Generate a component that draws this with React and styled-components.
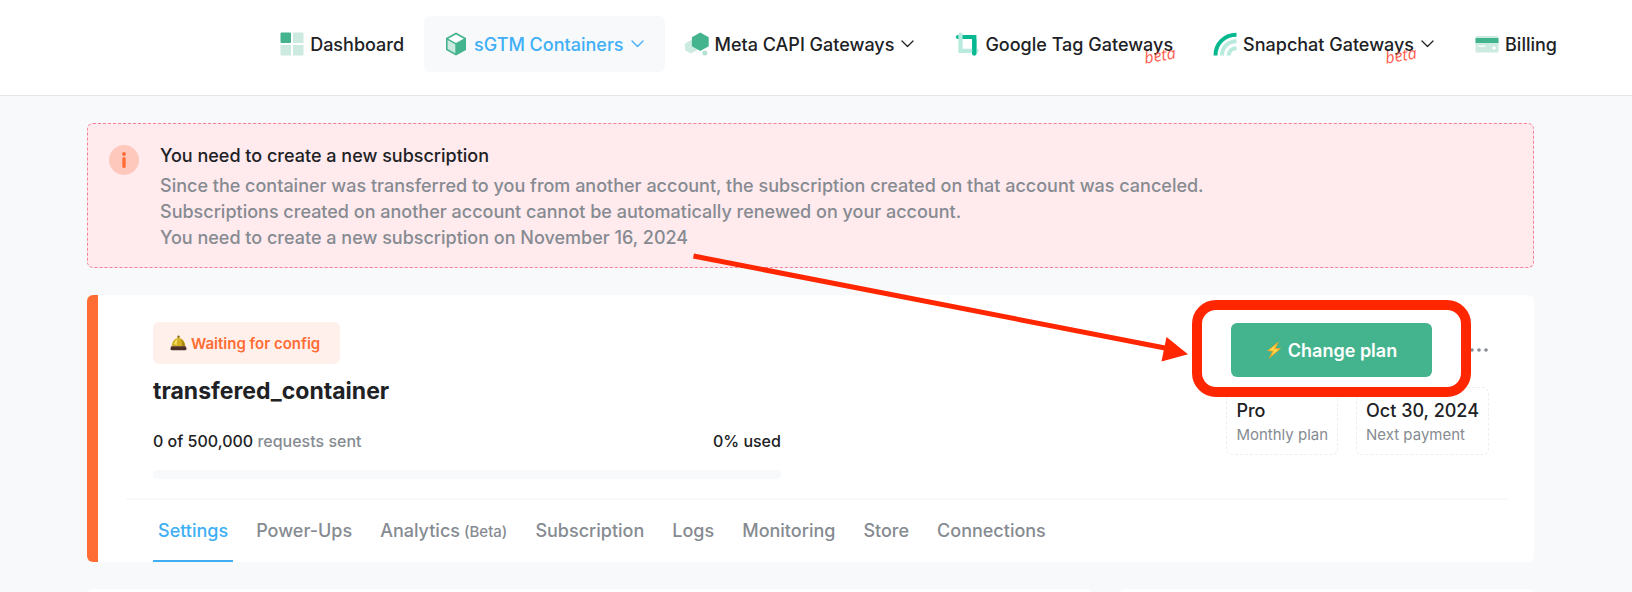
import React from 'react';
import styled, { createGlobalStyle } from 'styled-components';

const GlobalStyle = createGlobalStyle`
  * {
    box-sizing: border-box;
  }

  body {
    margin: 0;
    background: #f8f9fb;
    color: #202124;
    font-family: Inter, 'Liberation Sans', sans-serif;
    font-size: 18px;
    font-weight: 500;
  }

  button {
    font: inherit;
    border: 0;
    cursor: pointer;
  }

  a {
    color: inherit;
    text-decoration: none;
  }

  h1, h2, p {
    margin: 0;
  }
`;

const Page = styled.div`
  display: flex;
  flex-direction: column;
  height: 100vh;
  overflow: hidden;
`;

const Header = styled.header`
  flex: none;
  background: #fff;
  border-bottom: 1px solid #e2e5ea;
  padding: 16px 55px 23px;
`;

const Nav = styled.nav`
  display: flex;
  justify-content: flex-end;
`;

const NavLink = styled.a`
  display: flex;
  align-items: center;
  gap: 6px;
  height: 56px;
  padding: 0 20px;
  border-radius: 6px;
  white-space: nowrap;
  color: ${({ $active }) => ($active ? '#3eaff5' : 'inherit')};
  background: ${({ $active }) => ($active ? '#f8f9fb' : 'transparent')};

  svg {
    flex: none;
  }
`;

const NavLabel = styled.span`
  position: relative;
`;

const Beta = styled.sup`
  position: absolute;
  right: -2px;
  bottom: -10px;
  font-family: 'Open Sans', sans-serif;
  font-size: 16px;
  font-weight: 400;
  font-style: italic;
  line-height: 20px;
  color: #ff5c4d;
  transform: rotate(-10deg);
`;

const Main = styled.main`
  flex: 1;
  display: flex;
  flex-direction: column;
  gap: 27px;
  min-height: 0;
  padding: 27px 98px 0 87px;
`;

const Alert = styled.section`
  flex: none;
  display: flex;
  gap: 21px;
  padding: 19px 21px 16px;
  background: #ffeaee;
  border: 1px dashed #f77f9b;
  border-radius: 6px;
`;

const AlertIcon = styled.svg`
  flex: none;
  margin-top: 2px;
`;

const AlertTitle = styled.h2`
  font-size: 18px;
  font-weight: 500;
  line-height: 26px;
  margin-bottom: 4px;
`;

const AlertText = styled.p`
  color: #868b91;
  line-height: 26px;
`;

const Card = styled.section`
  flex: none;
  background: #fff;
  border-left: 11px solid #ff6d34;
  border-radius: 6px;
  padding: 27px 27px 0 28px;
`;

const CardTop = styled.div`
  display: flex;
  justify-content: space-between;
  padding: 0 18px 19px 27px;
`;

const Info = styled.div`
  width: 47%;
`;

const Status = styled.span`
  display: inline-flex;
  align-items: center;
  gap: 4px;
  height: 42px;
  padding: 0 20px 0 17px;
  border-radius: 6px;
  background: #fff0ec;
  color: #ff6d34;
  font-size: 15px;
  font-weight: 600;
`;

const Title = styled.h1`
  margin-top: 12px;
  font-size: 23px;
  font-weight: 700;
  line-height: 30px;
`;

const Usage = styled.div`
  display: flex;
  justify-content: space-between;
  margin-top: 23px;
  font-size: 16px;
  line-height: 24px;

  span {
    color: #868b91;
  }
`;

const Track = styled.div`
  height: 9px;
  margin-top: 17px;
  border-radius: 4px;
  background: #f8f9fb;
`;

const Side = styled.div`
  display: flex;
  flex-direction: column;
  align-items: flex-end;
  gap: 10px;
  padding-top: 1px;
`;

const Actions = styled.div`
  display: flex;
  align-items: center;
  gap: 37px;
`;

const ButtonWrap = styled.div`
  position: relative;
`;

const PlanButton = styled.button`
  display: flex;
  align-items: center;
  justify-content: center;
  gap: 6px;
  width: 201px;
  height: 54px;
  border-radius: 6px;
  background: #44b48e;
  color: #fff;
  font-weight: 600;
`;

const Highlight = styled.div`
  position: absolute;
  inset: -23px -39px -20px;
  border: 10px solid #ff2600;
  border-radius: 24px;
  pointer-events: none;
`;

const Arrow = styled.svg`
  position: absolute;
  top: -70px;
  right: calc(100% + 43px);
  pointer-events: none;
`;

const MoreButton = styled.button`
  display: flex;
  padding: 10px 1px;
  background: none;
`;

const Facts = styled.div`
  display: flex;
  gap: 18px;
`;

const Fact = styled.div`
  padding: 11px 9px 7px;
  height: 68px;
  border: 1px dashed #eceef0;
  border-radius: 6px;
  line-height: 24px;
  white-space: nowrap;

  p {
    color: #868b91;
    font-size: 15px;
    font-weight: 400;
  }
`;

const Tabs = styled.nav`
  display: flex;
  gap: 18px;
  padding-left: 27px;
  border-top: 2px solid #f8f9fb;
`;

const Tab = styled.a`
  height: 62px;
  padding: 0 5px;
  line-height: 62px;
  white-space: nowrap;
  color: ${({ $active }) => ($active ? '#3eaff5' : '#868b91')};
  border-bottom: 2px solid ${({ $active }) => ($active ? '#3eaff5' : 'transparent')};

  small {
    font-size: 15px;
  }
`;

const Panels = styled.div`
  flex: none;
  display: grid;
  grid-template-columns: 1005fr 415fr;
  gap: 27px;
`;

const Panel = styled.section`
  min-height: 320px;
  border-radius: 6px;
  background: #fff;
`;

const DashboardIcon = () => (
  <svg width="24" height="24" viewBox="0 0 24 24">
    <rect x="0.5" y="0.5" width="10.5" height="10.5" rx="1" fill="#44b48e" />
    <path d="M13 .5h10.5V11H13zM.5 13H11v10.5H.5zM13 13h10.5v10.5H13z" fill="#cdeae0" />
  </svg>
);

const ContainerIcon = () => (
  <svg width="24" height="24" viewBox="0 0 24 24">
    <path d="M12 .5l10 5.6v11.8L12 23.5 2 17.9V6.1z" fill="#44b48e" />
    <path d="M12 2.4l7.8 4.3L12 11 4.2 6.7z" fill="#fff" />
    <path d="M3.6 8l7.7 4.3v9L3.6 17z" fill="#cdeae0" />
  </svg>
);

const MetaIcon = () => (
  <svg width="24" height="24" viewBox="0 0 24 24">
    <path d="M6 8l6 3.4v6.8l-6 3.4-6-3.4v-6.8z" fill="#cdeae0" />
    <circle cx="19.8" cy="21" r="2.5" fill="#b4e2d2" />
    <path d="M15.3.5l8.4 4.7v9.1l-8.4 4.7-8.4-4.7V5.2z" fill="#44b48e" />
  </svg>
);

const TagIcon = () => (
  <svg width="24" height="24" viewBox="0 0 24 24" fill="none" strokeWidth="4.2" strokeLinecap="round">
    <path d="M3 5h16.3v16.5" stroke="#06b890" />
    <path d="M5.5 2.5v16.3h16" stroke="#b8eadd" />
    <path d="M19.3 8v13.5" stroke="#06b890" />
  </svg>
);

const SnapIcon = () => (
  <svg width="24" height="24" viewBox="0 0 24 24" fill="none" strokeWidth="4">
    <path d="M2.5 23.500C2.500 11.500 11.500 2.700 23.500 2.700" stroke="#06b890" />
    <path d="M9 23.500C9 15.200 15.200 9.300 23.500 9.300" stroke="#b8eadd" />
    <path d="M15.8 23.500C15.800 19 19 16.200 23.500 16.200" stroke="#b8eadd" />
  </svg>
);

const BillingIcon = () => (
  <svg width="24" height="24" viewBox="0 0 24 24">
    <rect x="0.5" y="4" width="23" height="16.5" rx="1.5" fill="#cdeae0" />
    <path d="M.5 6h23v5H.5z" fill="#44b48e" />
    <path d="M3.5 13.5h7v1.3h-7z" fill="#fff" />
    <circle cx="19" cy="16" r="1.8" fill="#fff" />
  </svg>
);

const Chevron = () => (
  <svg width="15" height="16" viewBox="0 0 15 16" fill="none" stroke="currentColor" strokeWidth="1.3">
    <path d="M2 5l5.5 5.5L13 5" strokeLinecap="round" strokeLinejoin="round" />
  </svg>
);

const BellIcon = () => (
  <svg width="17" height="16" viewBox="0 0 17 16">
    <circle cx="8.5" cy="1.8" r="1.3" fill="#8d7212" />
    <path d="M1.8 11.5C2 6.500 4.500 3 8.500 3s6.500 3.500 6.700 8.500z" fill="#d3b021" />
    <path d="M4.3 9c.4-2.600 1.600-4.300 3.400-4.800C6.900 6 6.600 8 6.800 10.200z" fill="#f6e36b" />
    <path d="M11 4.200c2.500 1.200 3.800 3.800 4.100 7.300h-3.200c.3-2.800 0-5.200-.9-7.300z" fill="#a88713" />
    <path d="M1.3 11.200h14.400l.8 2.300c.2 1-.4 1.700-1.400 1.700H1.900c-1 0-1.600-.7-1.400-1.700z" fill="#4c3028" />
  </svg>
);

const BoltIcon = () => (
  <svg width="16" height="18" viewBox="0 0 16 18">
    <path d="M13 .3L1 9.900l5.200.7L2.500 18 15.200 7.600l-5.400-.6z" fill="#f5a623" />
    <path d="M11.300 2.400L3.300 9.100l4.700.5-2.700 5.200 7.400-6.200-5-.5z" fill="#ffdc50" />
  </svg>
);

const navItems = [
  { label: 'Dashboard', icon: DashboardIcon },
  { label: 'sGTM Containers', icon: ContainerIcon, menu: true, active: true },
  { label: 'Meta CAPI Gateways', icon: MetaIcon, menu: true },
  { label: 'Google Tag Gateways', icon: TagIcon, beta: true },
  { label: 'Snapchat Gateways', icon: SnapIcon, menu: true, beta: true },
  { label: 'Billing', icon: BillingIcon },
];

const tabs = ['Power-Ups', 'Analytics', 'Subscription', 'Logs', 'Monitoring', 'Store', 'Connections'];

const App = () => {
  return (
    <Page>
      <GlobalStyle />
      <Header>
        <Nav>
          {navItems.map(({ label, icon: Icon, menu, beta, active }) => (
            <NavLink href="#" key={label} $active={active}>
              <Icon />
              <NavLabel>
                {label}
                {beta && <Beta>beta</Beta>}
              </NavLabel>
              {menu && <Chevron />}
            </NavLink>
          ))}
        </Nav>
      </Header>
      <Main>
        <Alert>
          <AlertIcon width="30" height="30" viewBox="0 0 30 30">
            <circle cx="15" cy="15" r="15" fill="#ffc8bd" />
            <circle cx="15" cy="9" r="1.9" fill="#ff6d34" />
            <path d="M15 13.8v7.6" stroke="#ff6d34" strokeWidth="3.4" strokeLinecap="round" />
          </AlertIcon>
          <div>
            <AlertTitle>You need to create a new subscription</AlertTitle>
            <AlertText>
              Since the container was transferred to you from another account, the subscription created on that account was canceled.
            </AlertText>
            <AlertText>Subscriptions created on another account cannot be automatically renewed on your account.</AlertText>
            <AlertText>You need to create a new subscription on November 16, 2024</AlertText>
          </div>
        </Alert>
        <Card>
          <CardTop>
            <Info>
              <Status>
                <BellIcon />
                Waiting for config
              </Status>
              <Title>transfered_container</Title>
              <Usage>
                <p>
                  0 of 500,000 <span>requests sent</span>
                </p>
                <p>0% used</p>
              </Usage>
              <Track />
            </Info>
            <Side>
              <Actions>
                <ButtonWrap>
                  <PlanButton type="button">
                    <BoltIcon />
                    Change plan
                  </PlanButton>
                  <Highlight />
                  <Arrow width="495" height="110" viewBox="0 0 495 110">
                    <path d="M.5 3L472 95" stroke="#ff2600" strokeWidth="5" />
                    <path d="M495 101.300L473.500 84l-5 24.500z" fill="#ff2600" />
                  </Arrow>
                </ButtonWrap>
                <MoreButton type="button" aria-label="More">
                  <svg width="18" height="4" viewBox="0 0 18 4" fill="#868b91">
                    <circle cx="2" cy="2" r="1.8" />
                    <circle cx="9" cy="2" r="1.8" />
                    <circle cx="16" cy="2" r="1.8" />
                  </svg>
                </MoreButton>
              </Actions>
              <Facts>
                <Fact>
                  Pro
                  <p>Monthly plan</p>
                </Fact>
                <Fact>
                  Oct 30, 2024
                  <p>Next payment</p>
                </Fact>
              </Facts>
            </Side>
          </CardTop>
          <Tabs>
            <Tab href="#" $active>
              Settings
            </Tab>
            {tabs.map((tab) => (
              <Tab href="#" key={tab}>
                {tab}
                {tab === 'Analytics' && <small> (Beta)</small>}
              </Tab>
            ))}
          </Tabs>
        </Card>
        <Panels>
          <Panel />
          <Panel />
        </Panels>
      </Main>
    </Page>
  );
};

export default App;
